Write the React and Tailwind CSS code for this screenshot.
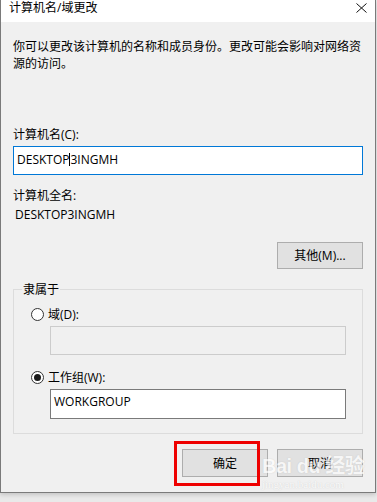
export default function App() {
  const font = { fontFamily: '"Open Sans", "Noto Sans CJK SC", sans-serif' };
  return (
    <div
      className="relative w-[377px] h-[502px] bg-[#e9e9e9] overflow-hidden text-[12px] leading-[17px] text-black"
      style={font}
    >
      <div className="w-[376px] border-l border-r border-b border-[#7a7a7a] bg-[#f0f0f0] shadow-[0_2px_4px_rgba(0,0,0,0.15)]">
        {/* title bar */}
        <div className="h-[22px] bg-white flex justify-between">
          <div className="pl-[8px] leading-[16px] text-[12px]">计算机名/域更改</div>
          <div className="pr-[8px] pt-[3px]">
            <svg width="11" height="10" viewBox="0 0 11 10">
              <path d="M0.5 0.5 L10.5 9.5 M10.5 0.5 L0.5 9.5" stroke="#111" strokeWidth="1" fill="none" />
            </svg>
          </div>
        </div>

        {/* body */}
        <div className="px-3 pt-[16px] pb-[15px] flex flex-col">
          <p className="leading-[17px]">
            你可以更改该计算机的名称和成员身份。更改可能会影响对网络资
            <br />
            源的访问。
          </p>

          <div className="mt-[54px]">计算机名(C):</div>
          <div className="mt-[3px] h-[29px] border border-[#0078d7] bg-white flex items-center pl-[3px] pb-[3px]">
            <span>DESKTOP</span>
            <span className="w-px h-[13px] bg-black"></span>
            <span>3INGMH</span>
          </div>

          <div className="mt-[12px]">计算机全名:</div>
          <div className="mt-[2px] pl-[2px]">DESKTOP3INGMH</div>

          <div className="mt-[19px] flex justify-end">
            <button className="w-[86px] h-[27px] bg-[#e1e1e1] border border-[#adadad] flex items-center justify-center">
              其他(M)...
            </button>
          </div>

          {/* group box */}
          <div className="relative mt-[20px] border border-[#dcdcdc] pl-[17px] pr-[16px] pt-[16px] pb-[14px]">
            <span className="absolute left-[8px] -top-[9px] bg-[#f0f0f0] px-px leading-[17px]">隶属于</span>

            <div className="flex items-center gap-[4px]">
              <span className="w-[13px] h-[13px] rounded-full border border-[#333] bg-white"></span>
              <span>域(D):</span>
            </div>
            <div className="mt-[3px] ml-[19px] h-[29px] border border-[#cccccc] bg-[#f0f0f0]"></div>

            <div className="mt-[14px] flex items-center gap-[4px]">
              <span className="w-[13px] h-[13px] rounded-full border border-[#333] bg-white flex items-center justify-center">
                <span className="w-[7px] h-[7px] rounded-full bg-[#1a1a1a]"></span>
              </span>
              <span>工作组(W):</span>
            </div>
            <div className="mt-[3px] ml-[19px] h-[30px] border border-[#7a7a7a] bg-white pl-[3px] pt-[3px]">
              WORKGROUP
            </div>
          </div>

          <div className="mt-[15px] flex justify-end gap-[9px]">
            <button className="w-[86px] h-[28px] bg-[#e1e1e1] border border-[#adadad] flex items-center justify-center">
              确定
            </button>
            <button className="w-[86px] h-[28px] bg-[#e1e1e1] border border-[#adadad] flex items-center justify-center">
              取消
            </button>
          </div>
        </div>
      </div>

      {/* red highlight */}
      <div className="absolute left-[174px] top-[441px] w-[86px] h-[45px] border-[3px] border-[#ee0000]"></div>

      {/* watermark */}
      <div
        className="absolute left-[262px] top-[454px] text-white opacity-70 pointer-events-none"
        style={{ textShadow: '0 0 1px rgba(150,150,150,0.6)' }}
      >
        <div className="text-[20px] font-bold leading-[24px] tracking-tight" style={{ fontFamily: '"Liberation Sans", "Noto Sans CJK SC", sans-serif' }}>
          Bai du 经验
        </div>
        <div className="text-[11px] leading-[13px]" style={{ fontFamily: '"Liberation Serif", serif' }}>
          jingyan.baidu.com
        </div>
      </div>
    </div>
  );
}
